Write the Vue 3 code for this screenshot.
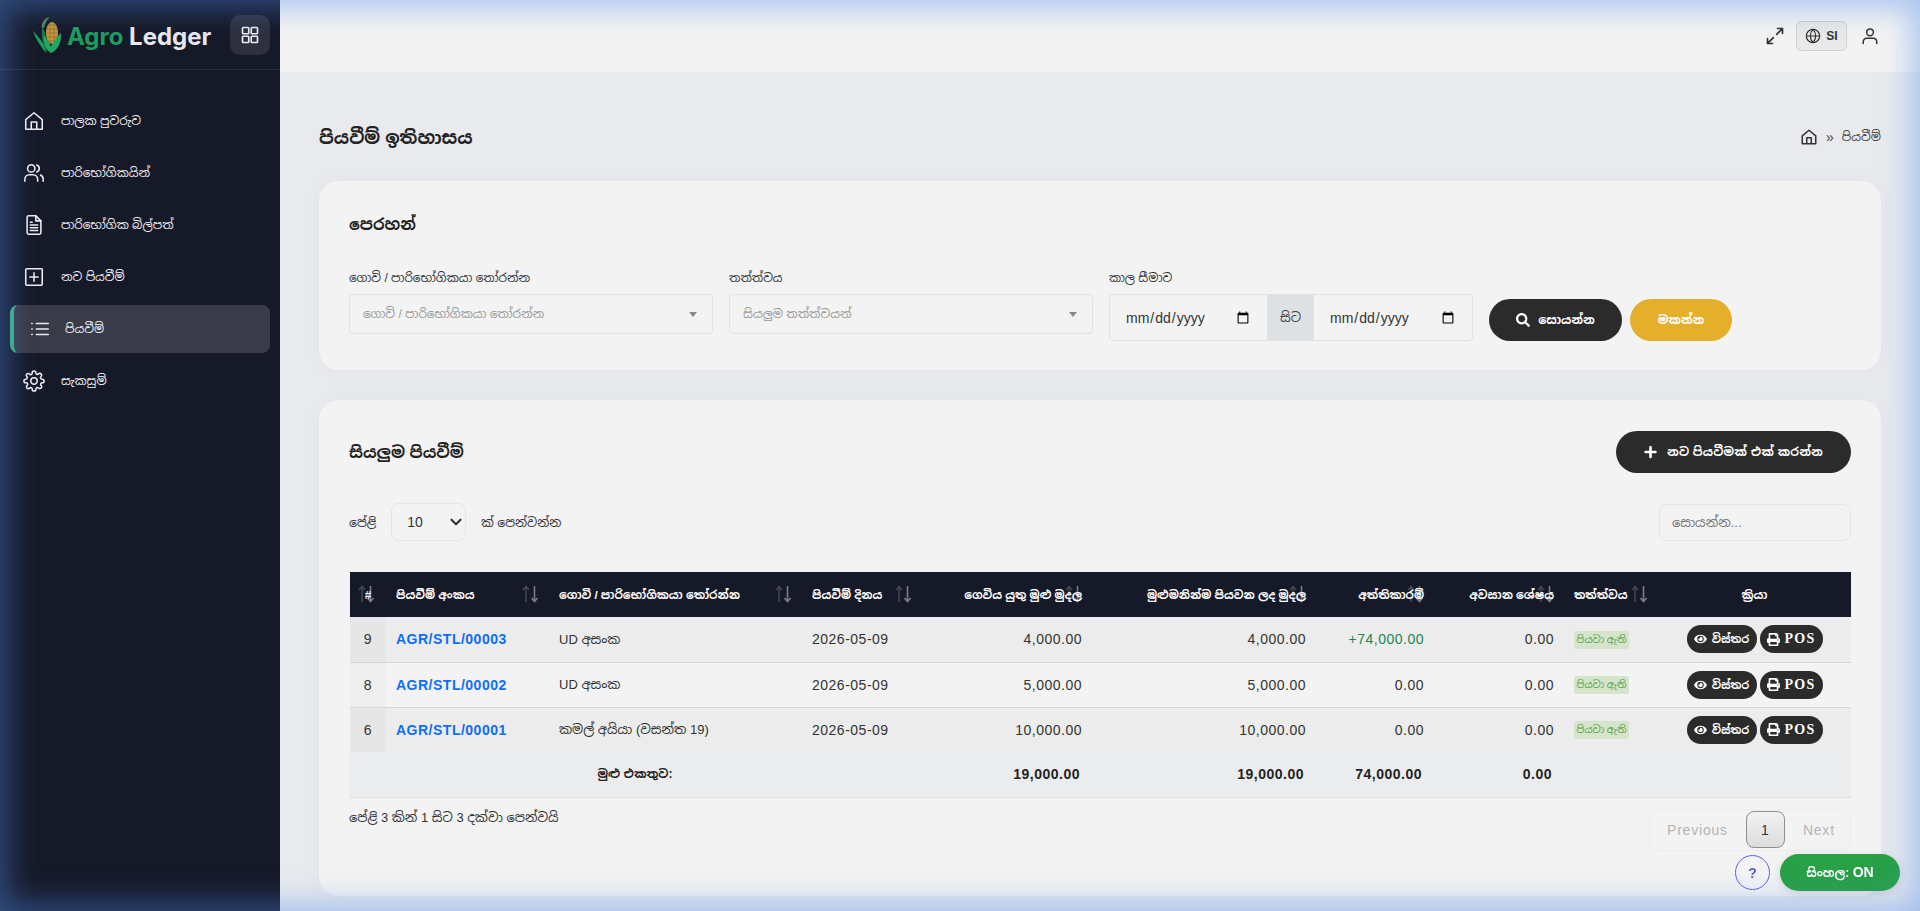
<template>
  <div class="layout">
    <!-- වම් පැත්තේ මෙනුව -->
    <aside class="sidebar">
      <div class="brand">
        <svg class="brand-logo" viewBox="0 0 32 38" width="32" height="38">
          <path d="M14 37C9 30 4 24 1 15c4 4 8 9 11 14z" fill="#1e9e5e" />
          <path d="M15 37c-4-8-6-17-5-25 3 2 3 6 4 9z" fill="#177a4a" />
          <path d="M10 12C9 8 12 2 18 1c-3 2-5 6-6 11z" fill="#4d8a5a" />
          <ellipse cx="20" cy="17" rx="6" ry="11" fill="#c9973f" />
          <path d="M16 9h8M15 13h10M14.500 17h11M15 21h10M16 25h8M18 7v20M22 7v20" stroke="#8d6a2a" stroke-width=".7" fill="none" />
          <path d="M19 37c-5-3-8-9-7-18 3 4 6 8 7 12 1-4 5-9 10-14 1 9-3 17-10 20z" fill="#22a862" />
        </svg>
        <span class="brand-name"><span class="brand-agro">Agro</span> Ledger</span>
        <button class="grid-btn" type="button">
          <svg viewBox="0 0 24 24" width="20" height="20" fill="none" stroke="currentColor" stroke-width="2">
            <rect x="3" y="3" width="7.500" height="7.500" rx="1" />
            <rect x="13.500" y="3" width="7.500" height="7.500" rx="1" />
            <rect x="3" y="13.500" width="7.500" height="7.500" rx="1" />
            <rect x="13.500" y="13.500" width="7.500" height="7.500" rx="1" />
          </svg>
        </button>
      </div>
      <nav class="nav">
        <a v-for="item in navItems" :key="item.label" :class="['nav-item', { active: item.active }]">
          <svg class="nav-icon" viewBox="0 0 24 24" width="22" height="22" fill="none" stroke="currentColor" stroke-width="1.700" stroke-linecap="round" stroke-linejoin="round">
            <path v-for="d in item.paths" :key="d" :d="d" />
          </svg>
          <span>{{ item.label }}</span>
        </a>
      </nav>
    </aside>

    <div class="main">
      <header class="topbar">
        <svg class="top-icon" viewBox="0 0 24 24" width="20" height="20" fill="none" stroke="#333" stroke-width="2" stroke-linecap="round" stroke-linejoin="round">
          <path d="M14 10l7-7M15 3h6v6M10 14l-7 7M3 15v6h6" />
        </svg>
        <button class="lang-btn" type="button">
          <svg viewBox="0 0 24 24" width="16" height="16" fill="none" stroke="#333" stroke-width="1.800">
            <circle cx="12" cy="12" r="10" />
            <path d="M2 12h20M12 2c3 3 4 6.500 4 10s-1 7-4 10c-3-3-4-6.500-4-10s1-7 4-10z" />
          </svg>
          <span>SI</span>
        </button>
        <svg class="user-icon" viewBox="0 0 24 24" width="18" height="20" fill="none" stroke="#333" stroke-width="2" stroke-linecap="round">
          <circle cx="12" cy="7" r="4.500" />
          <path d="M3 22v-2c0-3 2-5 5-5h8c3 0 5 2 5 5v2" />
        </svg>
      </header>

      <main class="content">
        <div class="page-head">
          <h1>පියවීම් ඉතිහාසය</h1>
          <div class="crumbs">
            <svg viewBox="0 0 24 24" width="18" height="18" fill="none" stroke="#333" stroke-width="2" stroke-linejoin="round">
              <path d="M3 10.500L12 3l9 7.500V21H3z" />
              <path d="M9 21v-8h6v8" />
            </svg>
            <span class="crumb-sep">»</span>
            <span>පියවීම්</span>
          </div>
        </div>

        <!-- පෙරහන් -->
        <section class="card filter-card">
          <h2>පෙරහන්</h2>
          <div class="filter-grid">
            <div class="field">
              <label>ගොවි / පාරිභෝගිකයා තෝරන්න</label>
              <div class="fake-select">
                <span>ගොවි / පාරිභෝගිකයා තෝරන්න</span>
                <i class="caret"></i>
              </div>
            </div>
            <div class="field">
              <label>තත්ත්වය</label>
              <div class="fake-select">
                <span>සියලුම තත්ත්වයන්</span>
                <i class="caret"></i>
              </div>
            </div>
            <div class="field">
              <label>කාල සීමාව</label>
              <div class="date-group">
                <input class="date-from" type="date" />
                <span class="date-to">සිට</span>
                <input type="date" />
              </div>
            </div>
            <div class="filter-actions">
              <button class="btn btn-dark" type="button">
                <svg viewBox="0 0 512 512" width="14" height="14" fill="currentColor">
                  <path d="M505 442.700L405.300 343c-4.500-4.500-10.600-7-17-7H372c27.600-35.300 44-79.700 44-128C416 93.100 322.900 0 208 0S0 93.100 0 208s93.100 208 208 208c48.300 0 92.700-16.400 128-44v16.300c0 6.400 2.500 12.500 7 17l99.700 99.700c9.400 9.400 24.600 9.400 33.900 0l28.300-28.300c9.400-9.400 9.400-24.600.1-34zM208 336c-70.700 0-128-57.200-128-128 0-70.700 57.200-128 128-128 70.700 0 128 57.200 128 128 0 70.700-57.200 128-128 128z" />
                </svg>
                සොයන්න
              </button>
              <button class="btn btn-gold" type="button">මකන්න</button>
            </div>
          </div>
        </section>

        <!-- සියලුම පියවීම් -->
        <section class="card list-card">
          <div class="list-head">
            <h2>සියලුම පියවීම්</h2>
            <button class="btn btn-dark btn-new" type="button">
              <svg viewBox="0 0 448 512" width="13" height="14" fill="currentColor">
                <path d="M416 208H272V64c0-17.700-14.300-32-32-32h-32c-17.700 0-32 14.300-32 32v144H32c-17.700 0-32 14.300-32 32v32c0 17.700 14.300 32 32 32h144v144c0 17.700 14.300 32 32 32h32c17.700 0 32-14.300 32-32V304h144c17.700 0 32-14.300 32-32v-32c0-17.700-14.300-32-32-32z" />
              </svg>
              නව පියවීමක් එක් කරන්න
            </button>
          </div>

          <div class="table-tools">
            <div class="length">
              <span>පේළි</span>
              <select>
                <option>10</option>
              </select>
              <span>ක් පෙන්වන්න</span>
            </div>
            <input class="search" type="text" placeholder="සොයන්න..." />
          </div>

          <table class="table">
            <colgroup>
              <col v-for="w in colWidths" :key="w.id" :style="{ width: w.px + 'px' }" />
            </colgroup>
            <thead>
              <tr>
                <th v-for="col in columns" :key="col.label" :class="col.cls">
                  {{ col.label }}
                  <svg v-if="col.sort" class="sort" viewBox="0 0 17 18" width="17" height="18" fill="none" stroke="#fff" stroke-width="1.500">
                    <path class="sort-up" d="M4 17V1.500M1 5l3-3.500L7 5" />
                    <path class="sort-down" d="M12.500 1v15.500M9.500 13l3 3.500 3-3.500" />
                  </svg>
                </th>
              </tr>
            </thead>
            <tbody>
              <tr v-for="row in rows" :key="row.no">
                <td class="no">{{ row.no }}</td>
                <td><a class="ref">{{ row.ref }}</a></td>
                <td class="si">{{ row.customer }}</td>
                <td>{{ row.date }}</td>
                <td class="num">{{ row.due }}</td>
                <td class="num">{{ row.paid }}</td>
                <td :class="['num', { plus: row.extra.startsWith('+') }]">{{ row.extra }}</td>
                <td class="num">0.00</td>
                <td><span class="badge">පියවා ඇති</span></td>
                <td class="acts">
                  <button class="mini" type="button">
                    <svg viewBox="0 0 576 512" width="13" height="12" fill="currentColor">
                      <path d="M572.500 241.400C518.300 135.600 410.900 64 288 64S57.700 135.600 3.500 241.400a32.400 32.400 0 0 0 0 29.200C57.700 376.400 165.100 448 288 448s230.300-71.600 284.500-177.400a32.400 32.400 0 0 0 0-29.200zM288 400a144 144 0 1 1 144-144 143.900 143.900 0 0 1-144 144zm0-240a95.300 95.300 0 0 0-25.300 3.800 47.900 47.900 0 0 1-66.900 66.900A95.800 95.800 0 1 0 288 160z" />
                    </svg>
                    විස්තර
                  </button>
                  <button class="mini pos" type="button">
                    <svg viewBox="0 0 512 512" width="13" height="13" fill="currentColor">
                      <path d="M448 192V77.300c0-8.500-3.400-16.600-9.400-22.600L393.400 9.400c-6-6-14.100-9.400-22.600-9.400H96C78.300 0 64 14.300 64 32v160c-35.300 0-64 28.700-64 64v112c0 8.800 7.200 16 16 16h48v96c0 17.700 14.300 32 32 32h320c17.700 0 32-14.300 32-32v-96h48c8.800 0 16-7.200 16-16V256c0-35.300-28.700-64-64-64zm-64 256H128v-96h256v96zm0-224H128V64h192v48c0 8.800 7.200 16 16 16h48v96zm48 72c-13.300 0-24-10.700-24-24s10.700-24 24-24 24 10.700 24 24-10.700 24-24 24z" />
                    </svg>
                    POS
                  </button>
                </td>
              </tr>
            </tbody>
            <tfoot>
              <tr>
                <td colspan="4" class="total-label">මුළු එකතුව:</td>
                <td class="num">19,000.00</td>
                <td class="num">19,000.00</td>
                <td class="num">74,000.00</td>
                <td class="num">0.00</td>
                <td colspan="2"></td>
              </tr>
            </tfoot>
          </table>

          <div class="table-foot">
            <div class="info">පේළි 3 කින් 1 සිට 3 දක්වා පෙන්වයි</div>
            <div class="pager">
              <span class="page-link">Previous</span>
              <span class="page-cur">1</span>
              <span class="page-link">Next</span>
            </div>
          </div>
        </section>
      </main>
    </div>

    <div class="float-btns">
      <button class="help" type="button">?</button>
      <button class="si-toggle" type="button">සිංහල: <span class="si-on">ON</span></button>
    </div>
    <div class="edge-glow"></div>
  </div>
</template>

<script setup>
const navItems = [
  { label: 'පාලක පුවරුව', paths: ['M3 10.500L12 3l9 7.500V21H3z', 'M9 21v-8h6v8'] },
  { label: 'පාරිභෝගිකයින්', paths: ['M9 11a4 4 0 1 0 0-8 4 4 0 0 0 0 8z', 'M2 21v-2a5 5 0 0 1 5-5h4a5 5 0 0 1 5 5v2', 'M15 3.200a4 4 0 0 1 0 7.600', 'M19 14.200a5 5 0 0 1 3 4.800v2'] },
  { label: 'පාරිභෝගික බිල්පත්', paths: ['M14 2H6a1.500 1.500 0 0 0-1.500 1.500v17A1.500 1.500 0 0 0 6 22h12a1.500 1.500 0 0 0 1.500-1.500V7.500z', 'M14 2v5.500h5.500', 'M8 12h8M8 15h8M8 18h8M8 9h2'] },
  { label: 'නව පියවීම්', paths: ['M4 3h16a1 1 0 0 1 1 1v16a1 1 0 0 1-1 1H4a1 1 0 0 1-1-1V4a1 1 0 0 1 1-1z', 'M12 7.500v9M7.500 12h9'] },
  { label: 'පියවීම්', active: true, paths: ['M8 6h13M8 12h13M8 18h13', 'M3 6h.500M3 12h.500M3 18h.500'] },
  { label: 'සැකසුම්', paths: ['M12 15.500a3.500 3.500 0 1 0 0-7 3.500 3.500 0 0 0 0 7z', 'M19.400 15a1.650 1.650 0 0 0 .33 1.820l.06.06a2 2 0 1 1-2.830 2.830l-.06-.06a1.650 1.650 0 0 0-2.820 1.170V21a2 2 0 1 1-4 0v-.09a1.650 1.650 0 0 0-2.800-1.170l-.06.06a2 2 0 1 1-2.830-2.830l.06-.06A1.650 1.650 0 0 0 3.090 14H3a2 2 0 1 1 0-4h.09a1.650 1.650 0 0 0 1.170-2.800l-.06-.06a2 2 0 1 1 2.830-2.830l.06.06A1.650 1.650 0 0 0 10 3.090V3a2 2 0 1 1 4 0v.09a1.650 1.650 0 0 0 2.800 1.170l.06-.06a2 2 0 1 1 2.830 2.830l-.06.06A1.650 1.650 0 0 0 20.910 10H21a2 2 0 1 1 0 4h-.09a1.650 1.650 0 0 0-1.510 1z'] }
]

const columns = [
  { label: '#', sort: true, cls: 'th-no' },
  { label: 'පියවීම් අංකය', sort: true },
  { label: 'ගොවි / පාරිභෝගිකයා තෝරන්න', sort: true },
  { label: 'පියවීම් දිනය', sort: true },
  { label: 'ගෙවිය යුතු මුළු මුදල', sort: true, cls: 'num' },
  { label: 'මුළුමනින්ම පියවන ලද මුදල', sort: true, cls: 'num' },
  { label: 'අත්තිකාරම්', sort: true, cls: 'num' },
  { label: 'අවසාන ශේෂය', sort: true, cls: 'num' },
  { label: 'තත්ත්වය', sort: true },
  { label: 'ක්‍රියා', cls: 'center' }
]

const colWidths = [36, 163, 253, 120, 170, 224, 118, 130, 94, 193].map((px, id) => ({ id, px }))

const rows = [
  { no: 9, ref: 'AGR/STL/00003', customer: 'UD අසංක', date: '2026-05-09', due: '4,000.00', paid: '4,000.00', extra: '+74,000.00' },
  { no: 8, ref: 'AGR/STL/00002', customer: 'UD අසංක', date: '2026-05-09', due: '5,000.00', paid: '5,000.00', extra: '0.00' },
  { no: 6, ref: 'AGR/STL/00001', customer: 'කමල් අයියා (වසන්ත 19)', date: '2026-05-09', due: '10,000.00', paid: '10,000.00', extra: '0.00' }
]
</script>

<style>
html,
body {
  margin: 0;
  background: #e9eaee;
}
</style>

<style scoped>
.layout {
  display: flex;
  height: 911px;
  overflow: hidden;
  font-family: "Liberation Sans", "Noto Sans Sinhala", Arial, sans-serif;
  font-size: 14px;
  color: #333;
}

.sidebar {
  width: 280px;
  flex-shrink: 0;
  background: #161928;
  color: #eceef2;
}

.brand {
  height: 69px;
  box-sizing: content-box;
  display: flex;
  align-items: center;
  padding: 0 10px 0 32px;
  border-bottom: 1px solid #2a2d3b;
}

.brand-logo {
  flex-shrink: 0;
  margin-right: 3px;
}

.brand-name {
  flex: 1;
  padding-top: 3px;
  font-family: Inter, sans-serif;
  font-size: 24px;
  font-weight: 700;
  white-space: nowrap;
  color: #e8e8ee;
}

.brand-agro {
  color: #1d9d5f;
}

.grid-btn {
  width: 40px;
  height: 40px;
  border: none;
  border-radius: 10px;
  background: #2e303e;
  color: #eceef2;
  display: flex;
  align-items: center;
  justify-content: center;
  padding: 0;
}

.nav {
  display: flex;
  flex-direction: column;
  padding: 27px 10px 0;
  gap: 4px;
}

.nav-item {
  height: 48px;
  display: flex;
  align-items: center;
  gap: 16px;
  padding-left: 13px;
  font-size: 12px;
  border-radius: 8px;
  box-sizing: border-box;
}

.nav-item.active {
  background: #3a3a48;
  border-left: 4px solid #3fb37a;
  padding-left: 15px;
  gap: 14px;
}

.nav-icon {
  flex-shrink: 0;
}

.main {
  flex: 1;
  min-width: 0;
  display: flex;
  flex-direction: column;
}

.topbar {
  height: 72px;
  flex-shrink: 0;
  background: #f3f3f3;
  display: flex;
  align-items: center;
  justify-content: flex-end;
  padding: 0 41px 0 0;
}

.top-icon {
  margin-right: 11px;
}

.lang-btn {
  width: 51px;
  height: 30px;
  border: 1px solid #d0d1d4;
  border-radius: 5px;
  background: #e9e9e9;
  display: flex;
  align-items: center;
  justify-content: center;
  gap: 5px;
  padding: 0;
  font-family: inherit;
  font-size: 12px;
  font-weight: 700;
  color: #333;
}

.user-icon {
  margin-left: 14px;
}

.content {
  padding: 49px 39px 0;
}

.page-head {
  height: 32px;
  margin-bottom: 28px;
  display: flex;
  align-items: center;
  justify-content: space-between;
}

h1 {
  margin: 0;
  font-size: 18px;
  font-weight: 700;
  color: #222;
}

.crumbs {
  display: flex;
  align-items: center;
  gap: 8px;
  font-size: 12px;
  color: #444;
}

.crumb-sep {
  font-size: 14px;
}

.card {
  background: #f3f3f3;
  border-radius: 20px;
  padding: 30px 30px 0;
  box-shadow: 0 0 20px rgba(60, 70, 90, 0.03);
}

.card h2 {
  margin: 0;
  font-size: 16px;
  font-weight: 700;
  color: #222;
}

.filter-card {
  height: 189px;
  box-sizing: border-box;
  margin-bottom: 30px;
  padding-top: 31px;
}

.filter-card h2 {
  line-height: 26px;
}

.filter-grid {
  margin-top: 30px;
  display: grid;
  grid-template-columns: 364px 364px 364px auto;
  gap: 16px;
  align-items: end;
}

.field label {
  display: block;
  font-size: 12px;
  line-height: 20px;
  margin-bottom: 6px;
  color: #333;
}

.field {
  align-self: start;
}

.fake-select {
  height: 40px;
  box-sizing: border-box;
  border: 1px solid #e2e2e4;
  border-radius: 4px;
  padding: 0 15px 0 13px;
  display: flex;
  align-items: center;
  justify-content: space-between;
  color: #999;
  font-size: 12px;
}

.caret {
  width: 0;
  height: 0;
  border-left: 4px solid transparent;
  border-right: 4px solid transparent;
  border-top: 5px solid #888;
}

.date-group {
  height: 47px;
  box-sizing: border-box;
  display: flex;
  border: 1px solid #e2e2e4;
  border-radius: 4px;
  overflow: hidden;
}

.date-group input {
  flex: 1;
  min-width: 0;
  border: none;
  background: transparent;
  padding: 0 15px;
  font-family: inherit;
  font-size: 14px;
  color: #333;
  outline: none;
}

.date-group .date-from {
  flex: none;
  width: 157px;
  box-sizing: border-box;
}

.date-to {
  width: 47px;
  flex-shrink: 0;
  background: #dee1e4;
  display: flex;
  align-items: center;
  justify-content: center;
  font-size: 13px;
  color: #444;
}

.filter-actions {
  display: flex;
  gap: 8px;
}

.btn {
  height: 42px;
  border: none;
  border-radius: 21px;
  padding: 0;
  display: flex;
  align-items: center;
  justify-content: center;
  gap: 8px;
  font-family: inherit;
  font-size: 12px;
  font-weight: 700;
  color: #fff;
}

.btn-dark {
  width: 133px;
  background: #2b2b2b;
}

.btn-gold {
  width: 102px;
  background: #e5af2c;
}

.list-card {
  height: 496px;
  box-sizing: border-box;
  padding-top: 31px;
}

.list-head {
  display: flex;
  align-items: center;
  justify-content: space-between;
  height: 42px;
}

.btn-new {
  width: 235px;
  gap: 10px;
  letter-spacing: 0.2px;
}

.table-tools {
  margin-top: 30px;
  display: flex;
  align-items: center;
  justify-content: space-between;
  height: 38px;
}

.length {
  display: flex;
  align-items: center;
  gap: 15px;
  font-size: 12.500px;
}

.length select {
  appearance: none;
  width: 75px;
  height: 38px;
  border: 1px solid #e6e6e8;
  border-radius: 8px;
  background: transparent url("data:image/svg+xml,%3Csvg xmlns='http://www.w3.org/2000/svg' viewBox='0 0 16 16'%3E%3Cpath fill='none' stroke='%23343a40' stroke-linecap='round' stroke-linejoin='round' stroke-width='3' d='M2 5l6 6 6-6'/%3E%3C/svg%3E") no-repeat right 3px center / 12px;
  padding: 0 12px 0 15px;
  font-family: inherit;
  font-size: 14px;
  color: #333;
}

.search {
  width: 192px;
  height: 37px;
  box-sizing: border-box;
  border: 1px solid #e6e6e8;
  border-radius: 8px;
  background: transparent;
  padding: 0 12px;
  font-family: inherit;
  font-size: 13px;
  outline: none;
}

.table {
  margin-top: 31px;
  margin-left: 1px;
  width: 1501px;
  table-layout: fixed;
  border-collapse: collapse;
  letter-spacing: 0.5px;
}

.table th {
  position: relative;
  height: 45px;
  padding: 0 10px;
  background: #161928;
  color: #fff;
  font-size: 11.500px;
  font-weight: 700;
  text-align: left;
  white-space: nowrap;
  letter-spacing: 0;
}

.table td {
  padding: 0 10px;
  height: 45px;
  box-sizing: border-box;
  white-space: nowrap;
}

.table tbody tr {
  background: #f3f3f3;
  border-bottom: 1px solid #d6d6d6;
}

.table tbody tr:nth-child(odd) {
  background: #ececec;
}

.table tbody tr:last-child {
  border-bottom: none;
}

.table tbody .no {
  background: #eeeeee;
  text-align: center;
}

.table tbody tr:nth-child(odd) .no {
  background: #e6e6e6;
}

.table th.num,
.table td.num {
  text-align: right;
}

.table th.center {
  text-align: center;
}

/* datatables style sort arrows, they sit over the header text */
.sort {
  position: absolute;
  right: 10px;
  top: 13px;
}

.sort-up {
  opacity: 0.2;
}

.sort-down {
  opacity: 0.45;
}

.table th.th-no {
  padding: 0;
  text-align: center;
}

.th-no .sort {
  right: 11px;
}

.ref {
  color: #0d6efd;
  font-weight: 700;
}

.si {
  font-size: 13px;
  letter-spacing: 0;
}

.plus {
  color: #198754;
}

.badge {
  display: inline-block;
  height: 18px;
  line-height: 18px;
  width: 55px;
  text-align: center;
  border-radius: 3px;
  background: #d4e5cc;
  color: #5ba34a;
  font-size: 10px;
  letter-spacing: 0;
}

.acts {
  text-align: center;
}

.mini {
  height: 28px;
  width: 70px;
  border: none;
  border-radius: 14px;
  background: #2b2b2b;
  color: #fff;
  padding: 0;
  display: inline-flex;
  align-items: center;
  justify-content: center;
  gap: 5px;
  font-family: inherit;
  font-size: 11px;
  font-weight: 700;
  vertical-align: middle;
}

.mini.pos {
  width: 63px;
  margin-left: 3px;
  font-family: "Liberation Serif", serif;
  font-size: 14px;
  letter-spacing: 1.200px;
}

.table tfoot tr {
  background: #ebecee;
  border-bottom: 1px solid #e0e0e2;
}

.table tfoot td {
  font-weight: 700;
  color: #222;
  padding-right: 12px;
}

.table tfoot .total-label {
  text-align: center;
  letter-spacing: 0;
  font-size: 12px;
}

.table-foot {
  display: flex;
  justify-content: space-between;
  align-items: flex-start;
  margin-top: 11px;
}

.info {
  font-size: 13px;
  line-height: 18px;
}

.pager {
  width: 202px;
  height: 42px;
  box-sizing: border-box;
  border: 1px solid #ececee;
  border-radius: 10px;
  padding-left: 17px;
  display: flex;
  align-items: center;
  gap: 18px;
  letter-spacing: 0.8px;
}

.page-link {
  color: #b4b4b4;
}

.page-cur {
  width: 39px;
  height: 37px;
  box-sizing: border-box;
  display: flex;
  align-items: center;
  justify-content: center;
  border: 1px solid #8f8f8f;
  border-radius: 8px;
  background: linear-gradient(#f2f2f2, #dcdcdc);
  color: #333;
}

.float-btns {
  position: fixed;
  right: 20px;
  bottom: 20px;
  display: flex;
  align-items: center;
  gap: 10px;
  z-index: 5;
}

.help {
  width: 35px;
  height: 35px;
  border: 1px solid #5a62e8;
  border-radius: 50%;
  background: #f3f3f6;
  color: #5a5fd8;
  font-family: inherit;
  font-size: 14px;
  font-weight: 700;
  padding: 0;
}

.si-toggle {
  width: 120px;
  height: 37px;
  border: none;
  border-radius: 19px;
  background: #28a046;
  color: #fff;
  font-family: inherit;
  font-size: 12px;
  font-weight: 700;
  padding: 0;
  box-shadow: 0 2px 8px rgba(0, 0, 0, 0.12);
}

.si-on {
  font-size: 14px;
}

.edge-glow {
  position: fixed;
  inset: 0;
  pointer-events: none;
  z-index: 10;
  box-shadow: inset 0 0 30px 8px rgba(80, 140, 235, 0.45);
}
</style>
